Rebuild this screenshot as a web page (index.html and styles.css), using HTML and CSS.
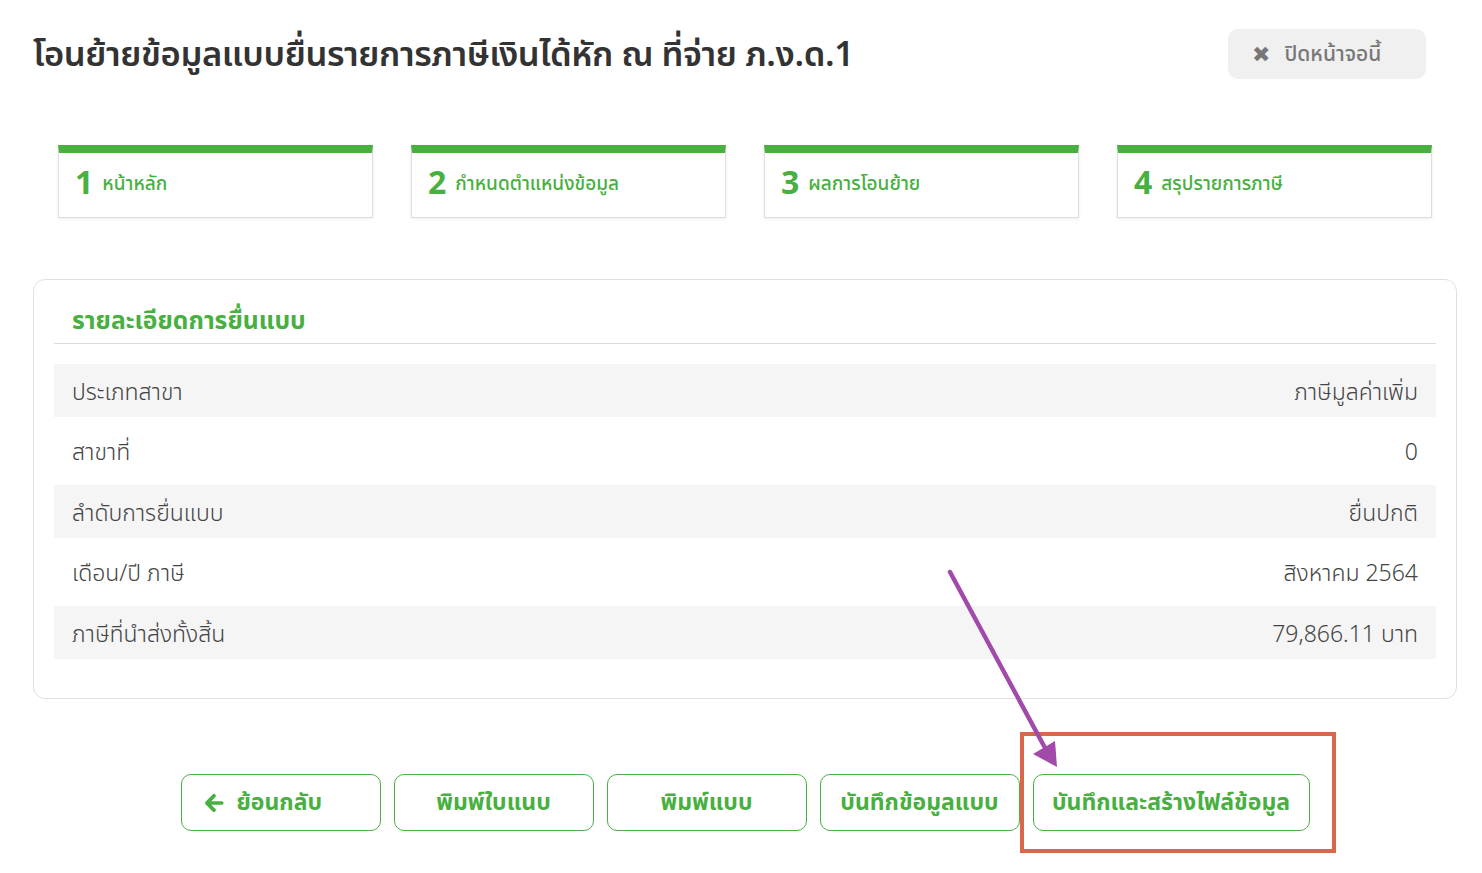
FILE: index.html
```html
<!DOCTYPE html>
<html lang="th">
<head>
    <meta charset="UTF-8">
    <meta name="viewport" content="width=device-width, initial-scale=1.0">
    <title>โอนย้ายข้อมูลแบบยื่นรายการภาษีเงินได้หัก ณ ที่จ่าย ภ.ง.ด.1</title>
    <link rel="stylesheet" href="styles.css">
</head>
<body>
    <div class="page">
        <div class="page-head">
            <h1>โอนย้ายข้อมูลแบบยื่นรายการภาษีเงินได้หัก ณ ที่จ่าย ภ.ง.ด.1</h1>
            <button class="close-btn"><span class="close-x">&#10006;</span> ปิดหน้าจอนี้</button>
        </div>

        <div class="steps">
            <div class="step"><span class="step-no">1</span><span class="step-name">หน้าหลัก</span></div>
            <div class="step"><span class="step-no">2</span><span class="step-name">กำหนดตำแหน่งข้อมูล</span></div>
            <div class="step"><span class="step-no">3</span><span class="step-name">ผลการโอนย้าย</span></div>
            <div class="step"><span class="step-no">4</span><span class="step-name">สรุปรายการภาษี</span></div>
        </div>

        <div class="panel">
            <h3 class="panel-title">รายละเอียดการยื่นแบบ</h3>
            <div class="detail-list">
                <div class="detail-row odd"><span>ประเภทสาขา</span><span>ภาษีมูลค่าเพิ่ม</span></div>
                <div class="detail-row"><span>สาขาที่</span><span>0</span></div>
                <div class="detail-row odd"><span>ลำดับการยื่นแบบ</span><span>ยื่นปกติ</span></div>
                <div class="detail-row"><span>เดือน/ปี ภาษี</span><span>สิงหาคม 2564</span></div>
                <div class="detail-row odd"><span>ภาษีที่นำส่งทั้งสิ้น</span><span>79,866.11 บาท</span></div>
            </div>
        </div>

        <div class="actions">
            <button class="btn btn-back">
                <svg class="back-icon" viewBox="0 0 20 20" width="22" height="22">
                    <path d="M17 10H4M10 3.5L3.5 10 10 16.5" fill="none" stroke="currentColor" stroke-width="3.4" stroke-linecap="round" stroke-linejoin="round"/>
                </svg>
                ย้อนกลับ
            </button>
            <button class="btn">พิมพ์ใบแนบ</button>
            <button class="btn">พิมพ์แบบ</button>
            <button class="btn">บันทึกข้อมูลแบบ</button>
            <div class="mark-wrap">
                <button class="btn btn-wide">บันทึกและสร้างไฟล์ข้อมูล</button>
                <div class="mark-box"></div>
                <svg class="mark-arrow" width="130" height="215" viewBox="0 0 130 215">
                    <line x1="3" y1="8" x2="97" y2="182" stroke="#a24aa9" stroke-width="4.5" stroke-linecap="round"/>
                    <polygon points="86,190 108,177 110,203" fill="#a24aa9"/>
                </svg>
            </div>
        </div>
    </div>
</body>
</html>
```

FILE: styles.css
```css
/* page */
body {
    margin: 0;
    background: #ffffff;
    font-family: "Noto Sans Thai", "Noto Sans", "DejaVu Sans", sans-serif;
    color: #444;
}
.page {
    padding: 26px 25px 40px 33px;
}
.page-head {
    display: flex;
    justify-content: space-between;
    align-items: flex-start;
}
h1 {
    margin: 8px 0 0 0;
    font-size: 34.6px;
    font-weight: 600;
    color: #333;
    letter-spacing: -0.4px;
    line-height: 44px;
}
.close-btn {
    margin: 3px 31px 0 0;
    width: 198px;
    height: 50px;
    border: none;
    border-radius: 10px;
    background: #f0f0f0;
    color: #777;
    font-family: inherit;
    font-size: 21px;
    font-weight: 500;
    display: flex;
    align-items: center;
    justify-content: flex-start;
    padding-left: 24px;
    gap: 6px;
}
.close-x {
    font-family: "DejaVu Sans", sans-serif;
    font-size: 22px;
    font-weight: 700;
    margin-right: 8px;
}

/* steps */
.steps {
    display: grid;
    grid-template-columns: repeat(4, 315px);
    justify-content: space-between;
    margin: 66px 25px 0 25px;
}
.step {
    box-sizing: border-box;
    height: 73px;
    border: 1px solid #dedede;
    border-top: 8px solid #47b03f;
    box-shadow: 0 1px 3px rgba(0, 0, 0, 0.08);
    display: flex;
    align-items: center;
    padding: 0 0 2px 16px;
    color: #47b03f;
}
.step-no {
    font-size: 32px;
    font-weight: 700;
    margin-right: 9px;
}
.step-name {
    font-size: 19px;
    font-weight: 500;
}

/* details */
.panel {
    margin-top: 61px;
    border: 1px solid #e0e0e0;
    border-radius: 12px;
    padding: 25px 20px 39px 20px;
}
.panel-title {
    margin: 0;
    padding: 0 0 4px 18px;
    border-bottom: 1px solid #dcdcdc;
    color: #47b03f;
    font-size: 24.7px;
    font-weight: 700;
    line-height: 34px;
}
.detail-list {
    margin-top: 20px;
}
.detail-row {
    box-sizing: border-box;
    height: 68px;
    display: flex;
    justify-content: space-between;
    align-items: center;
    padding: 4px 18px 0 18px;
    font-size: 23px;
    font-weight: 300;
    color: #444;
}
.detail-row.odd {
    height: 53px;
    background: #f5f5f5;
}

/* buttons */
.actions {
    display: flex;
    justify-content: center;
    gap: 13px;
    margin-top: 75px;
}
.btn {
    width: 200px;
    height: 57px;
    border: 1px solid #4caf46;
    border-radius: 10px;
    background: #fff;
    color: #47b03f;
    font-family: inherit;
    font-size: 23px;
    font-weight: 700;
    display: flex;
    align-items: center;
    justify-content: center;
    gap: 8px;
}
.btn-back {
    justify-content: flex-start;
    padding-left: 21px;
    gap: 12px;
}
.btn-wide {
    width: 277px;
}
.mark-wrap {
    position: relative;
}
.mark-box {
    position: absolute;
    left: -13px;
    top: -42px;
    width: 308px;
    height: 113px;
    border: 4px solid #d9674c;
}
.mark-arrow {
    position: absolute;
    left: -86px;
    top: -210px;
}
```
